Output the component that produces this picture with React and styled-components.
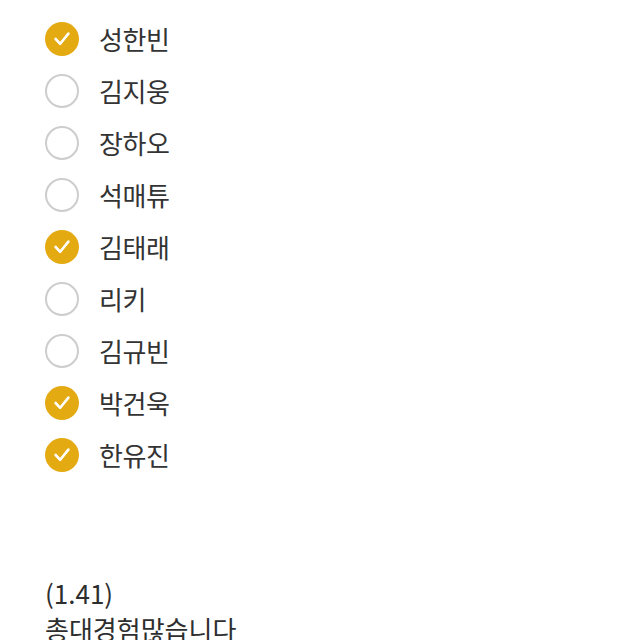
import React from 'react';
import styled, { createGlobalStyle } from 'styled-components';

const GlobalStyle = createGlobalStyle`
  html, body {
    margin: 0;
    padding: 0;
    background: #ffffff;
  }
  body {
    font-family: "Noto Sans CJK KR", "Noto Sans", sans-serif;
    color: #2e2e2e;
  }
`;

const Page = styled.div`
  padding: 13px 0 0 45px;
  width: 640px;
  height: 640px;
  box-sizing: border-box;
  overflow: hidden;
`;

const List = styled.ul`
  list-style: none;
  margin: 0;
  padding: 0;
`;

const Row = styled.li`
  display: flex;
  align-items: center;
  height: 52px;
  gap: 20px;
`;

const Circle = styled.span`
  width: 34px;
  height: 34px;
  border-radius: 50%;
  box-sizing: border-box;
  display: flex;
  align-items: center;
  justify-content: center;
  flex-shrink: 0;
  background: ${p => (p.$checked ? '#e4aa12' : '#ffffff')};
  border: ${p => (p.$checked ? 'none' : '2.5px solid #cdcdcd')};
`;

const Name = styled.span`
  font-size: 26px;
  line-height: 1;
  letter-spacing: -0.4px;
  color: #333333;
`;

const Note = styled.div`
  margin-top: 94px;
  font-size: 26px;
  line-height: 36px;
  color: #2e2e2e;
`;

const Check = () => (
  <svg width="20" height="20" viewBox="0 0 20 20" fill="none">
    <path
      d="M3.6 10 L8.2 14.8 L16.4 4.6"
      stroke="#ffffff"
      strokeWidth="2.6"
      strokeLinecap="round"
      strokeLinejoin="round"
    />
  </svg>
);

const members = [
  { name: '성한빈', checked: true },
  { name: '김지웅', checked: false },
  { name: '장하오', checked: false },
  { name: '석매튜', checked: false },
  { name: '김태래', checked: true },
  { name: '리키', checked: false },
  { name: '김규빈', checked: false },
  { name: '박건욱', checked: true },
  { name: '한유진', checked: true },
];

export default function App() {
  return (
    <>
      <GlobalStyle />
      <Page>
        <List>
          {members.map(m => (
            <Row key={m.name}>
              <Circle $checked={m.checked}>{m.checked && <Check />}</Circle>
              <Name>{m.name}</Name>
            </Row>
          ))}
        </List>
        <Note>
          (1.41)
          <br />
          총대경험많습니다
        </Note>
      </Page>
    </>
  );
}
